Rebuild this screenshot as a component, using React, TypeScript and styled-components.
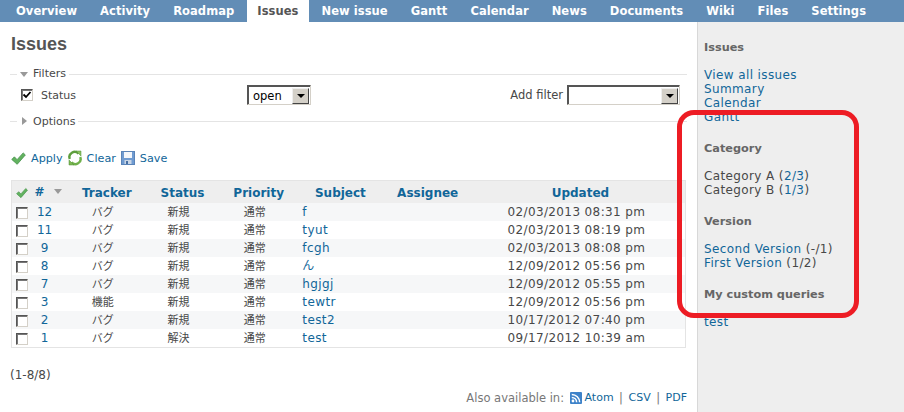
import { createGlobalStyle, styled } from "styled-components";

const GlobalStyle = createGlobalStyle`
  html, body { margin: 0; padding: 0; background: #fff; }
  body {
    font-family: "DejaVu Sans", "Noto Sans CJK JP", sans-serif;
    font-size: 12px;
    color: #484848;
  }
`;

const Page = styled.div`
  position: relative;
  width: 904px;
  height: 412px;
  overflow: hidden;
  display: flex;
  flex-direction: column;
`;

const Tabs = styled.nav`
  height: 22px;
  flex: none;
  background: #628db6;
  display: flex;
  gap: 3px;
  padding-left: 6px;
`;

const Tab = styled.a<{ $active?: boolean }>`
  padding: 0 10px;
  line-height: 23px;
  font-weight: 700;
  font-size: 11.5px;
  letter-spacing: 0.06px;
  color: ${(p) => (p.$active ? "#555" : "#fff")};
  background: ${(p) => (p.$active ? "#fff" : "transparent")};
`;

const Body = styled.div`
  flex: 1;
  display: flex;
  min-height: 0;
`;

const Content = styled.main`
  width: 697px;
  flex: none;
  box-sizing: border-box;
  padding: 0 10px;
`;

const Title = styled.h2`
  margin: 12px 1px 0;
  font-family: "Liberation Sans", sans-serif;
  font-size: 18px;
  line-height: 20px;
  color: #555;
`;

const Group = styled.fieldset<{ $gap: number }>`
  margin: ${(p) => p.$gap}px 0 0;
  padding: 0;
  border: 0;
  border-top: 1px solid #e4e4e4;
  min-width: 0;
`;

const Legend = styled.legend`
  margin-left: 7px;
  padding: 0 3px;
  height: 14px;
  line-height: 14px;
  font-size: 11px;
  display: flex;
  align-items: center;
  gap: 5px;
`;

const LegendText = styled.span<{ $drop?: boolean }>`
  margin-top: ${(p) => (p.$drop ? "2px" : "0")};
`;

const FilterRow = styled.div`
  display: flex;
  align-items: center;
  height: 22px;
  margin-top: 3px;
  padding-left: 11px;
`;

const StatusLabel = styled.span`
  width: 206px;
  margin-left: 8px;
  font-size: 11px;
`;

const AddFilter = styled.span`
  margin-left: auto;
  margin-right: 4px;
  font-size: 11.5px;
`;

const Select = styled.div<{ $width: number }>`
  box-sizing: border-box;
  width: ${(p) => p.$width}px;
  height: 20px;
  display: flex;
  align-items: center;
  justify-content: space-between;
  border: 1px solid;
  border-color: #555 #d4d0c8 #d4d0c8 #555;
  box-shadow: inset 1px 1px 0 #555;
  background: #fff;
  color: #000;
  font-size: 11.5px;
  padding: 2px 1px 1px 5px;
  margin-right: ${(p) => (p.$width > 100 ? "7px" : "0")};
`;

const SelectButton = styled.span`
  box-sizing: border-box;
  width: 17px;
  height: 16px;
  display: flex;
  align-items: center;
  justify-content: center;
  background: #d4d0c8;
  border: 1px solid;
  border-color: #eee #444 #444 #eee;
`;

const Arrow = styled.i`
  width: 0;
  height: 0;
  border-style: solid;
  border-width: 4px 4px 0;
  border-color: #000 transparent transparent;
`;

const Box = styled.span`
  box-sizing: border-box;
  width: 12px;
  height: 12px;
  flex: none;
  display: inline-flex;
  align-items: center;
  justify-content: center;
  vertical-align: middle;
  background: #fff;
  border: 1px solid;
  border-color: #555 #d4d0c8 #d4d0c8 #555;
  box-shadow: inset 1px 1px 0 #777;
`;

const Actions = styled.div`
  display: flex;
  align-items: center;
  height: 16px;
  margin: 22px 0 0 1px;
  font-size: 11.2px;
  color: #169;
`;

const Action = styled.a`
  display: flex;
  align-items: center;
  gap: 5px;
  margin-right: 5px;
`;

const IssueTable = styled.table`
  width: 675px;
  margin: 14px 0 0 1px;
  border-collapse: collapse;
  table-layout: fixed;
  border: 1px solid #e4e4e4;
  font-size: 12px;
`;

const Head = styled.th`
  box-sizing: border-box;
  height: 22px;
  padding: 3px 0 0 8px;
  background: #eee;
  color: #169;
  font-weight: 700;
  font-size: 12px;
  line-height: 14px;
  white-space: nowrap;
  text-align: center;
`;

const HeadLead = styled(Head)`
  padding: 1px 0 0;
  & svg {
    display: inline-block;
    vertical-align: middle;
  }
`;

const SortMark = styled.i`
  display: inline-block;
  width: 0;
  height: 0;
  margin-left: 9px;
  vertical-align: 2px;
  border-style: solid;
  border-width: 5px 4px 0;
  border-color: #999 transparent transparent;
`;

const Row = styled.tr`
  height: 18px;
  &:nth-child(odd) {
    background: #f6f7f8;
  }
`;

const Cell = styled.td`
  padding: 1px 0 0;
  text-align: center;
  font-size: 11px;
  line-height: 17px;
`;

const NumberCell = styled(Cell)`
  padding-right: 7px;
  color: #169;
  font-size: 12px;
`;

const SubjectCell = styled(Cell)`
  padding-left: 9px;
  text-align: left;
  color: #169;
  font-size: 12px;
  letter-spacing: 0.4px;
`;

const DateCell = styled(Cell)`
  font-size: 12px;
  letter-spacing: 0.38px;
`;

const Count = styled.p`
  margin: 20px 0 0;
  font-size: 12px;
  line-height: 14px;
`;

const Formats = styled.p`
  margin: 9px 0 0;
  display: flex;
  justify-content: flex-end;
  align-items: center;
  gap: 5.5px;
  font-size: 11.5px;
  line-height: 14px;
  color: #777;
`;

const FormatLink = styled.a`
  display: inline-flex;
  align-items: center;
  gap: 3px;
  color: #169;
  font-size: 11px;
`;

const Sidebar = styled.aside`
  flex: 1;
  background: #eee;
  border-left: 1px solid #d8d8d8;
  padding: 19px 0 0 6px;
`;

const SideHead = styled.h3<{ $gap: number }>`
  margin: ${(p) => p.$gap}px 0 13px;
  font-size: 11.3px;
  line-height: 14px;
  color: #666;
`;

const SideLine = styled.div`
  font-size: 12px;
  line-height: 14px;
  letter-spacing: 0.38px;
  white-space: nowrap;
`;

const SideLink = styled.a`
  color: #169;
`;

const Callout = styled.div`
  position: absolute;
  left: 677px;
  top: 110px;
  width: 182px;
  height: 208px;
  box-sizing: border-box;
  border: 5px solid #ed1c24;
  border-radius: 17px;
  pointer-events: none;
`;

const CheckIcon = ({ size = 15 }: { size?: number }) => (
  <svg width={size} height={size} viewBox="0 0 16 16">
    <path d="M0.8 9 3.6 6.2l2.9 3L13 2l2.3 2.2-8.7 10z" fill="#62b25f" stroke="#3f8e45" strokeWidth="0.8" strokeLinejoin="round" />
  </svg>
);

const ClearIcon = () => (
  <svg width="14" height="16" viewBox="0 0 14 16">
    <path d="M1.8 9A5.2 5.2 0 0 1 10.5 3.6" fill="none" stroke="#5d9e3c" strokeWidth="2.4" />
    <path d="M12.2 7A5.2 5.2 0 0 1 3.5 12.4" fill="none" stroke="#6fb04a" strokeWidth="2.4" />
    <path d="M8 1h5v5z" fill="#8cc45f" stroke="#4f8f38" strokeWidth="0.5" />
    <path d="M6 15H1v-5z" fill="#7db850" stroke="#4f8f38" strokeWidth="0.5" />
  </svg>
);

const SaveIcon = () => (
  <svg width="14" height="14" viewBox="0 0 14 14">
    <rect x="0.5" y="0.5" width="13" height="13" fill="#6f9bd1" stroke="#5a84b8" />
    <rect x="3" y="1" width="8" height="6" fill="#f3f6fa" />
    <rect x="3.5" y="9" width="7" height="4" fill="#c9d6e6" />
    <rect x="5" y="10" width="2" height="3" fill="#476fa3" />
  </svg>
);

const FeedIcon = () => (
  <svg width="12" height="12" viewBox="0 0 12 12">
    <rect width="12" height="12" rx="1" fill="#3d82c9" />
    <circle cx="3" cy="9" r="1.4" fill="#fff" />
    <path d="M1.8 5.4A4.8 4.8 0 0 1 6.6 10.2M1.8 2.4A7.8 7.8 0 0 1 9.6 10.2" fill="none" stroke="#fff" strokeWidth="1.5" />
  </svg>
);

const Tick = () => (
  <svg width="10" height="10" viewBox="0 0 10 10">
    <path d="M1.5 4.5 4 7l4.5-5" fill="none" stroke="#000" strokeWidth="1.8" />
  </svg>
);

const Triangle = ({ open }: { open: boolean }) => (
  <svg width="8" height="8" viewBox="0 0 8 8">
    <path d={open ? "M0 2h8L4 7z" : "M2 0l5 4-5 4z"} fill="#999" />
  </svg>
);

const tabs = ["Overview", "Activity", "Roadmap", "Issues", "New issue", "Gantt", "Calendar", "News", "Documents", "Wiki", "Files", "Settings"];

const issues = [
  [12, "バグ", "新規", "f", "02/03/2013 08:31 pm"],
  [11, "バグ", "新規", "tyut", "02/03/2013 08:19 pm"],
  [9, "バグ", "新規", "fcgh", "02/03/2013 08:08 pm"],
  [8, "バグ", "新規", "ん", "12/09/2012 05:56 pm"],
  [7, "バグ", "新規", "hgjgj", "12/09/2012 05:55 pm"],
  [3, "機能", "新規", "tewtr", "12/09/2012 05:56 pm"],
  [2, "バグ", "新規", "test2", "10/17/2012 07:40 pm"],
  [1, "バグ", "解決", "test", "09/17/2012 10:39 am"],
];

const colWidths = [20, 33, 76, 75, 77, 86, 88, 217];

export default function App() {
  return (
    <Page>
      <GlobalStyle />
      <Tabs>
        {tabs.map((t) => (
          <Tab key={t} $active={t === "Issues"}>{t}</Tab>
        ))}
      </Tabs>
      <Body>
        <Content>
          <Title>Issues</Title>
          <Group $gap={13}>
            <Legend><Triangle open /><LegendText>Filters</LegendText></Legend>
            <FilterRow>
              <Box><Tick /></Box>
              <StatusLabel>Status</StatusLabel>
              <Select $width={64}>open<SelectButton><Arrow /></SelectButton></Select>
              <AddFilter>Add filter</AddFilter>
              <Select $width={113}><span /><SelectButton><Arrow /></SelectButton></Select>
            </FilterRow>
          </Group>
          <Group $gap={8}>
            <Legend><Triangle open={false} /><LegendText $drop>Options</LegendText></Legend>
          </Group>
          <Actions>
            <Action><CheckIcon />Apply</Action>
            <Action><ClearIcon />Clear</Action>
            <Action><SaveIcon />Save</Action>
          </Actions>
          <IssueTable>
            <colgroup>
              {colWidths.map((w, i) => (
                <col key={i} width={w} />
              ))}
            </colgroup>
            <thead>
              <tr>
                <HeadLead><CheckIcon size={12} /></HeadLead>
                <HeadLead>#<SortMark /></HeadLead>
                <Head>Tracker</Head>
                <Head>Status</Head>
                <Head>Priority</Head>
                <Head>Subject</Head>
                <Head>Assignee</Head>
                <Head>Updated</Head>
              </tr>
            </thead>
            <tbody>
              {issues.map(([id, tracker, status, subject, updated]) => (
                <Row key={id}>
                  <Cell><Box /></Cell>
                  <NumberCell>{id}</NumberCell>
                  <Cell>{tracker}</Cell>
                  <Cell>{status}</Cell>
                  <Cell>通常</Cell>
                  <SubjectCell>{subject}</SubjectCell>
                  <Cell />
                  <DateCell>{updated}</DateCell>
                </Row>
              ))}
            </tbody>
          </IssueTable>
          <Count>(1-8/8)</Count>
          <Formats>
            Also available in:
            <FormatLink><FeedIcon />Atom</FormatLink>|
            <FormatLink>CSV</FormatLink>|
            <FormatLink>PDF</FormatLink>
          </Formats>
        </Content>
        <Sidebar>
          <SideHead $gap={0}>Issues</SideHead>
          <SideLine><SideLink>View all issues</SideLink></SideLine>
          <SideLine><SideLink>Summary</SideLink></SideLine>
          <SideLine><SideLink>Calendar</SideLink></SideLine>
          <SideLine><SideLink>Gantt</SideLink></SideLine>
          <SideHead $gap={18}>Category</SideHead>
          <SideLine>Category A (<SideLink>2/3</SideLink>)</SideLine>
          <SideLine>Category B (<SideLink>1/3</SideLink>)</SideLine>
          <SideHead $gap={18}>Version</SideHead>
          <SideLine><SideLink>Second Version</SideLink> (-/1)</SideLine>
          <SideLine><SideLink>First Version</SideLink> (1/2)</SideLine>
          <SideHead $gap={18}>My custom queries</SideHead>
          <SideLine><SideLink>test</SideLink></SideLine>
        </Sidebar>
      </Body>
      <Callout />
    </Page>
  );
}
